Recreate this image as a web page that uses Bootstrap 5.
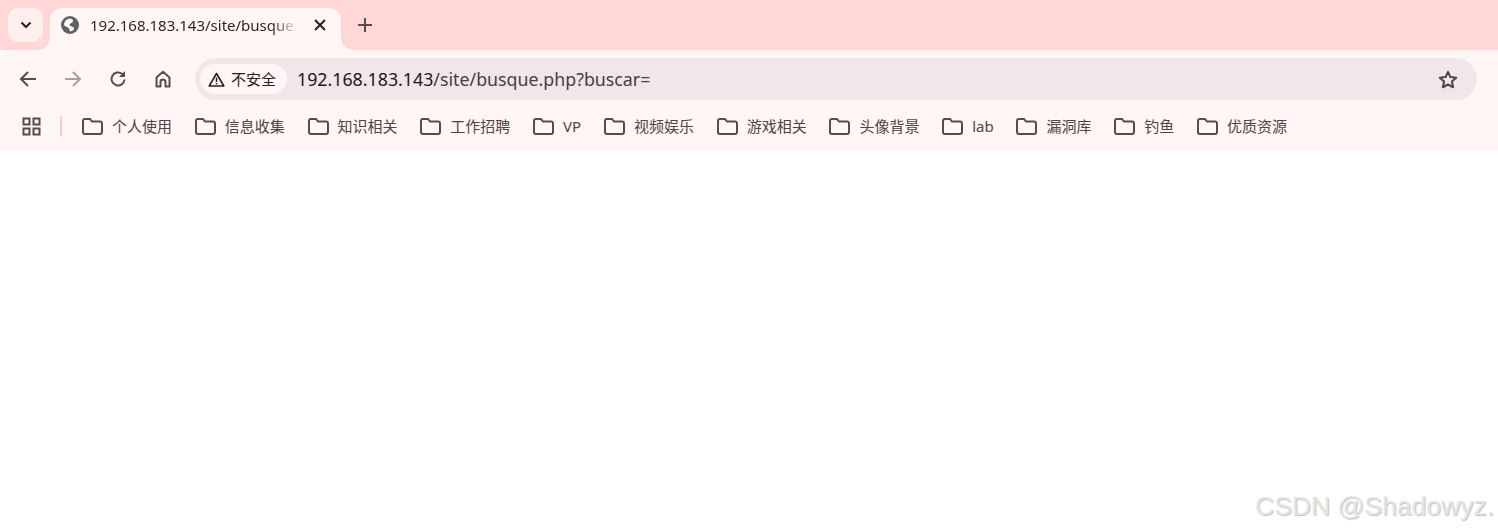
<!DOCTYPE html>
<html lang="en">
<head>
  <meta charset="UTF-8">
  <title>192.168.183.143/site/busque.php?buscar=</title>
  <link href="https://cdn.jsdelivr.net/npm/bootstrap@5.3.0/dist/css/bootstrap.min.css" rel="stylesheet">

  <style>
    body {
      background: #ffffff;
      font-family: "Noto Sans", "Noto Sans CJK SC", sans-serif;
      height: 531px;
      overflow: hidden;
    }

    .tab-strip {
      background: #ffd7d7;
      height: 50px;
      padding: 8px 0 0 8px;
    }

    .tab-menu {
      width: 35px;
      height: 34px;
      background: #fff0ef;
      border-radius: 10px;
      color: #2a1f20;
    }

    .tab-item {
      width: 291px;
      height: 42px;
      margin-left: 7px;
      padding: 0 0 8px 11px;
      background: #fff6f5;
      border-radius: 12px 12px 0 0;
      position: relative;
    }

    .tab-item::before,
    .tab-item::after {
      content: "";
      position: absolute;
      bottom: 0;
      width: 12px;
      height: 12px;
    }

    .tab-item::before {
      left: -12px;
      background: radial-gradient(circle at 0 0, #ffd7d7 11.5px, #fff6f5 12px);
    }

    .tab-item::after {
      right: -12px;
      background: radial-gradient(circle at 100% 0, #ffd7d7 11.5px, #fff6f5 12px);
    }

    .tab-name {
      width: 210px;
      margin-left: 11px;
      font-size: 15px;
      color: #2f2526;
      white-space: nowrap;
      -webkit-mask-image: linear-gradient(to right, #000 182px, transparent 208px);
      mask-image: linear-gradient(to right, #000 182px, transparent 208px);
    }

    .tab-close {
      margin-left: 14px;
    }

    .tab-new {
      height: 34px;
      margin-left: 17px;
    }

    .tool-bar {
      background: #fff6f5;
      height: 51px;
      padding: 8px 21px 1px 19px;
      border-radius: 12px 0 0 0;
      position: relative;
    }

    .nav-icons {
      height: 42px;
      gap: 27px;
    }

    .tool-icon {
      width: 18px;
      height: 18px;
      flex: none;
    }

    .omni-box {
      width: 1282px;
      height: 42px;
      margin-left: 23px;
      padding: 0 19px 0 5px;
      background: #f1e6e9;
      border-radius: 21px;
    }

    .safe-chip {
      width: 87px;
      height: 30px;
      padding-left: 8px;
      background: #fff6f5;
      border-radius: 15px;
      font-size: 15px;
      color: #2a1f20;
    }

    .safe-chip span {
      margin-left: 6px;
    }

    .url-text {
      margin-left: 10px;
      font-size: 17.8px;
      color: #4a3d3f;
      white-space: nowrap;
    }

    .url-text b {
      font-weight: 400;
      color: #1f1718;
    }

    .mark-bar {
      background: #fff6f5;
      height: 50px;
      padding: 0 0 0 22px;
      font-size: 15px;
      color: #4f4345;
    }

    .mark-sep {
      width: 2px;
      height: 20px;
      margin: 0 20px 0 19px;
      background: #ffc9cc;
    }

    .mark-item {
      margin-right: 22.75px;
      white-space: nowrap;
    }

    .mark-item svg {
      margin-right: 9px;
    }

    .water-mark {
      position: absolute;
      right: 4px;
      bottom: 9px;
      font-family: "Liberation Sans", sans-serif;
      font-size: 26.5px;
      line-height: 32px;
      color: #e4e4e4;
      text-shadow: 1px 1px 1px #c2c2c2;
    }
  </style>
</head>

<body>

  <!-- tabs -->
  <div class="tab-strip d-flex align-items-start">
    <div class="tab-menu d-flex align-items-center justify-content-center">
      <svg width="12" height="8" viewBox="0 0 12 8"><path d="M1.500 1.500 6 6l4.500-4.500" fill="none" stroke="currentColor" stroke-width="2"/></svg>
    </div>
    <div class="tab-item d-flex align-items-center">
      <svg width="18" height="18" viewBox="0 0 18 18">
        <circle cx="9" cy="9" r="9" fill="#5f6368"/>
        <path d="M9 2.500C11 2.500 12 3.500 12 5S10.500 7 9.500 7.500 8 9 9.500 10 13 10.500 13 12.500 11 15 9.500 15.500C8 14 8.500 12.500 7 11.500S4 10.500 3 9C3 5.500 6 2.500 9 2.500Z" fill="#fff6f5"/>
      </svg>
      <div class="tab-name">192.168.183.143/site/busque.</div>
      <svg class="tab-close" width="12" height="12" viewBox="0 0 12 12"><path d="M1 1l10 10M11 1 1 11" stroke="#2a1f20" stroke-width="2" fill="none"/></svg>
    </div>
    <div class="tab-new d-flex align-items-center">
      <svg width="14" height="14" viewBox="0 0 14 14"><path d="M7 0v14M0 7h14" stroke="#5b4a4c" stroke-width="2" fill="none"/></svg>
    </div>
  </div>

  <!-- toolbar -->
  <div class="tool-bar d-flex align-items-start">
    <div class="nav-icons d-flex align-items-center">
      <svg class="tool-icon" viewBox="0 0 18 18"><path d="M17 9H2M9 2 2 9l7 7" fill="none" stroke="#5b4a4c" stroke-width="2"/></svg>
      <svg class="tool-icon" viewBox="0 0 18 18"><path d="M1 9h15M9 2l7 7-7 7" fill="none" stroke="#ab9fa1" stroke-width="2"/></svg>
      <svg class="tool-icon" viewBox="0 0 18 18"><path d="M15.500 9.500A6.500 6.500 0 1 1 13.200 4L15.500 6" fill="none" stroke="#5b4a4c" stroke-width="2"/><path d="M16 1v6h-6z" fill="#5b4a4c"/></svg>
      <svg class="tool-icon" viewBox="0 0 18 18"><path d="M2.500 16.500V7.500L9 1.800l6.500 5.700v9h-4v-4.500a2.500 2.500 0 0 0-5 0v4.500Z" fill="none" stroke="#5b4a4c" stroke-width="2" stroke-linejoin="round"/></svg>
    </div>
    <div class="omni-box d-flex align-items-center">
      <div class="safe-chip d-flex align-items-center">
        <svg width="17" height="15" viewBox="0 0 17 15"><path d="M8.500 1.500 1.200 14h14.600Z" fill="none" stroke="#2a1f20" stroke-width="1.600" stroke-linejoin="round"/><path d="M8.500 5.500v4.500M8.500 11v1.600" stroke="#2a1f20" stroke-width="1.500"/></svg>
        <span>不安全</span>
      </div>
      <div class="url-text flex-grow-1"><b>192.168.183.143</b>/site/busque.php?buscar=</div>
      <svg width="20" height="19" viewBox="0 0 20 19"><path d="M10 1.800l2.400 5.300 5.800.6-4.300 3.900 1.200 5.700L10 14.400l-5.100 2.900 1.200-5.700L1.800 7.700l5.800-.6Z" fill="none" stroke="#4f4345" stroke-width="2" stroke-linejoin="round"/></svg>
    </div>
  </div>

  <!-- bookmarks -->
  <div class="mark-bar d-flex align-items-center" id="marks">
    <svg width="19" height="19" viewBox="0 0 19 19"><path d="M1.500 1.500h6v6h-6zM11.500 1.500h6v6h-6zM1.500 11.500h6v6h-6zM11.500 11.500h6v6h-6z" fill="none" stroke="#5b4a4c" stroke-width="2"/></svg>
    <div class="mark-sep"></div>
  </div>

  <div class="water-mark">CSDN @Shadowyz.</div>

  <script>
    var marks = ["个人使用", "信息收集", "知识相关", "工作招聘", "VP", "视频娱乐", "游戏相关", "头像背景", "lab", "漏洞库", "钓鱼", "优质资源"];
    var box = document.getElementById("marks");
    marks.forEach(function (name) {
      var item = document.createElement("div");
      item.className = "mark-item d-flex align-items-center";
      item.innerHTML = '<svg width="21" height="17" viewBox="0 0 21 17"><path d="M1 3a2 2 0 0 1 2-2h5l2 2.500h8a2 2 0 0 1 2 2V14a2 2 0 0 1-2 2H3a2 2 0 0 1-2-2Z" fill="none" stroke="#5b4a4c" stroke-width="2"/></svg>' +
        '<span>' + name + '</span>';
      box.appendChild(item);
    });
  </script>

  <script src="https://cdn.jsdelivr.net/npm/bootstrap@5.3.0/dist/js/bootstrap.bundle.min.js"></script>
</body>
</html>
